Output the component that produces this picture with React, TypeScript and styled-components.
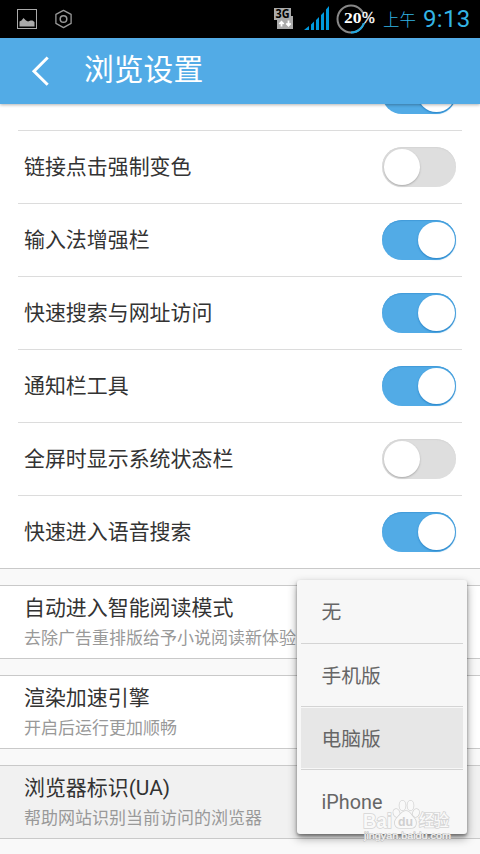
import React from "react";
import styled, { createGlobalStyle } from "styled-components";

const GlobalStyle = createGlobalStyle`
  * { box-sizing: border-box; }
  html, body { margin: 0; padding: 0; background: #f9f9f9; overflow: hidden; }
  body { font-family: Roboto, "Noto Sans CJK SC", sans-serif; }
`;

const Screen = styled.div`
  position: relative;
  display: flex;
  flex-direction: column;
  width: 480px;
  height: 854px;
  overflow: hidden;
  background: #f9f9f9;
`;

const StatusBar = styled.div`
  flex: none;
  display: flex;
  justify-content: space-between;
  height: 38px;
  background: #000;
  padding: 0 10px 0 17px;
`;

const StatusGroup = styled.div<{ $gap?: number }>`
  display: flex;
  align-items: center;
  gap: ${(p) => p.$gap ?? 0}px;
`;

const Battery = styled.div`
  position: relative;
  width: 40px;
  height: 38px;
  margin-left: 6px;
`;

const BatteryText = styled.div`
  position: absolute;
  left: 8px;
  top: 9px;
  display: flex;
  align-items: baseline;
  height: 18px;
  line-height: 18px;
  color: #fff;
  font-family: "Liberation Serif", serif;
`;

const Digits = styled.span`
  font-size: 14px;
  font-weight: bold;
  width: 14px;
  transform: scaleX(1.25);
  transform-origin: 0 50%;
  margin-right: 4px;
`;

const Percent = styled.span`
  font-size: 17px;
  width: 12px;
  -webkit-text-stroke: 0.4px #fff;
  transform: scaleX(0.9);
  transform-origin: 0 50%;
`;

const Meridiem = styled.span`
  margin: 4px 7px 0 7px;
  color: #33b5e5;
  font-size: 16.5px;
  line-height: 22px;
  font-weight: 300;
  white-space: nowrap;
`;

const Clock = styled.span`
  width: 47px;
  color: #33b5e5;
  font-size: 24px;
  letter-spacing: 0.3px;
  line-height: 38px;
  white-space: nowrap;
`;

const Header = styled.header`
  flex: none;
  z-index: 1;
  display: flex;
  align-items: center;
  height: 66px;
  padding: 0 0 2px 30px;
  background: #52abe6;
  box-shadow: 0 1px 3px rgba(0, 0, 0, 0.3);
`;

const Title = styled.h1`
  margin: 0 0 0 34px;
  color: #fff;
  font-size: 29.8px;
  line-height: 44px;
  font-weight: 400;
`;

const Content = styled.main`
  flex: 1;
  min-height: 0;
  overflow: hidden;
`;

const SwitchList = styled.section`
  margin-top: -46px;
  padding: 0 18px;
  background: #fff;
  border-bottom: 1px solid #c9c9c9;
`;

const SwitchRow = styled.div`
  display: flex;
  align-items: center;
  justify-content: space-between;
  height: 73px;
  padding: 0 6px;
  border-bottom: 1px solid #dcdcdc;
  &:last-child { border-bottom: 0; height: 72px; }
`;

const Label = styled.span`
  color: #333;
  font-size: 20.95px;
  line-height: 30px;
  white-space: nowrap;
`;

const Toggle = styled.span<{ $on: boolean }>`
  display: flex;
  justify-content: ${(p) => (p.$on ? "flex-end" : "flex-start")};
  width: 74px;
  height: 40px;
  padding: 2px 1.5px;
  border-radius: 20px;
  background: ${(p) => (p.$on ? "#52abe6" : "#dedede")};
  box-shadow: inset 0 1px 1px ${(p) => (p.$on ? "#429bd9" : "#d5d5d5")};
`;

const Knob = styled.span<{ $on: boolean }>`
  width: 36.5px;
  height: 36px;
  border-radius: 50%;
  background: #fff;
  box-shadow: 0 1px 2px ${(p) => (p.$on ? "#2481c6" : "#aaa")};
`;

const Card = styled.section<{ $pressed?: boolean }>`
  height: 74px;
  margin-top: 16px;
  padding: 7px 24px 0;
  background: ${(p) => (p.$pressed ? "#f1f1f1" : "#fff")};
  border-top: 1px solid #c9c9c9;
  border-bottom: 1px solid #c9c9c9;
`;

const CardTitle = styled.div`
  color: #333;
  font-size: 20.95px;
  line-height: 30px;
`;

const CardNote = styled.div`
  margin-top: 2px;
  color: #999;
  font-size: 17px;
  line-height: 26px;
  white-space: nowrap;
`;

const Menu = styled.div`
  position: absolute;
  z-index: 2;
  left: 297px;
  top: 580px;
  width: 170px;
  height: 254px;
  padding: 0 4px;
  border-radius: 3px;
  background: #f7f7f7;
  box-shadow: 0 4px 10px rgba(0, 0, 0, 0.38), 0 2px 3px rgba(0, 0, 0, 0.35);
`;

const MenuItem = styled.div<{ $selected?: boolean }>`
  display: flex;
  align-items: center;
  height: ${(p) => (p.$selected ? 63 : 64)}px;
  padding: 0 0 2px 20.5px;
  border-bottom: 1px solid #d4d4d4;
  color: #666;
  font-size: 19.8px;
  background: ${(p) => (p.$selected ? "#e7e7e7" : "transparent")};
  box-shadow: ${(p) => (p.$selected ? "inset 0 1px #f7f7f7, inset 0 -1px #f7f7f7" : "none")};
  &:nth-child(2) { height: 63px; }
  &:last-child { border-bottom: 0; padding-bottom: 0; }
`;

const Watermark = styled.div`
  position: absolute;
  z-index: 3;
  left: 360px;
  top: 796px;
  width: 96px;
  height: 48px;
`;

const options = [
  { label: "无" },
  { label: "手机版" },
  { label: "电脑版", selected: true },
  { label: "iPhone" },
];

const switches = [
  { label: "", on: true },
  { label: "链接点击强制变色", on: false },
  { label: "输入法增强栏", on: true },
  { label: "快速搜索与网址访问", on: true },
  { label: "通知栏工具", on: true },
  { label: "全屏时显示系统状态栏", on: false },
  { label: "快速进入语音搜索", on: true },
];

const cards = [
  { title: "自动进入智能阅读模式", note: "去除广告重排版给予小说阅读新体验" },
  { title: "渲染加速引擎", note: "开启后运行更加顺畅" },
  { title: "浏览器标识(UA)", note: "帮助网站识别当前访问的浏览器", pressed: true },
];

const PictureIcon = () => (
  <svg width="20" height="38" viewBox="0 0 20 38">
    <rect x="0.5" y="9.5" width="19" height="19" fill="none" stroke="#aaa" />
    <path d="M2.500 26.500v-5l2-1 2-2.500 2.500 2.500 2 1 2.500-1h2l2 1.500v4.500z" fill="#aaa" />
  </svg>
);

const HexIcon = () => (
  <svg width="18" height="38" viewBox="0 0 18 38" fill="none" stroke="#999" strokeWidth="1.3">
    <path d="M9.500 10.400l7.600 4v9l-7.600 4.200-7.600-4.200v-9z" strokeLinejoin="round" />
    <circle cx="9.500" cy="19" r="3.300" strokeWidth="1.500" />
  </svg>
);

const NetworkIcon = () => (
  <svg width="20" height="38" viewBox="0 0 20 38">
    <path d="M1 8h17v8h3v13H4v-9H1z" fill="#aaa" />
    <text x="2.500" y="18" fontFamily="Open Sans, sans-serif" fontWeight="bold" fontSize="11.500" textLength="14" lengthAdjust="spacingAndGlyphs" fill="#000">3G</text>
    <path d="M8.500 26.500v-5M6.300 24l2.200-2.300 2.200 2.300M15.500 20.500v5M13.300 23.300l2.200 2.300 2.200-2.300" fill="none" stroke="#fff" strokeWidth="1.800" />
  </svg>
);

const SignalIcon = () => (
  <svg width="26" height="38" viewBox="0 0 26 38" fill="#0099dd">
    <path d="M0 30l5-4v4zM7 24.500l3-3V30H7zM12 20l3-3v13h-3zM17 15l3-3v18h-3zM22 9.500L25 6v24h-3z" />
  </svg>
);

const BatteryRing = () => (
  <svg width="40" height="38" viewBox="0 0 40 38" fill="none">
    <circle cx="15" cy="19" r="13.500" stroke="#888" strokeWidth="2" />
    <path d="M28.500 20A13.500 13.500 0 0 1 15 32.500" stroke="#22a7df" strokeWidth="2" />
    <path d="M24 13h10v10H24z" fill="#000" />
  </svg>
);

const BackIcon = () => (
  <svg width="20" height="36" viewBox="0 0 20 36">
    <path d="M17.700 5.500L4 19.200l13.700 13.500" fill="none" stroke="#fff" strokeWidth="3" />
  </svg>
);

const WatermarkMark = () => (
  <svg width="96" height="48" viewBox="0 0 96 48" fontFamily="Liberation Sans, Noto Sans CJK SC, sans-serif" fontWeight="bold">
    <g fill="#f9f9f9" stroke="#d4d4d4" strokeWidth="1.600" paintOrder="stroke">
      <text x="3" y="32" fontSize="20" textLength="29" lengthAdjust="spacingAndGlyphs">Bai</text>
      <ellipse cx="36.500" cy="17" rx="3" ry="4" transform="rotate(-18 36.500 17)" />
      <ellipse cx="42.500" cy="9.500" rx="3" ry="4.700" />
      <ellipse cx="50.500" cy="9.500" rx="3" ry="4.700" />
      <ellipse cx="56" cy="17" rx="3" ry="4" transform="rotate(18 56 17)" />
      <path d="M46 15c4 0 5 4 8 7 3 3 3 10-3 10H40c-5 0-7-6-3-10 3-3 5-7 9-7z" />
      <text x="59" y="30" fontSize="15.500" textLength="30" fontWeight="500">经验</text>
    </g>
    <text x="38" y="30" fontSize="13" fill="#cfcfcf" textLength="15" lengthAdjust="spacingAndGlyphs">du</text>
    <text x="4" y="43" fontSize="9.500" fontWeight="400" fill="#f6f6f6" stroke="#bbb" strokeWidth="0.800" paintOrder="stroke" textLength="87" lengthAdjust="spacingAndGlyphs">jingyan.baidu.com</text>
  </svg>
);

export default function App() {
  return (
    <Screen>
      <GlobalStyle />
      <StatusBar>
        <StatusGroup $gap={17}>
          <PictureIcon />
          <HexIcon />
        </StatusGroup>
        <StatusGroup>
          <StatusGroup $gap={11}>
            <NetworkIcon />
            <SignalIcon />
          </StatusGroup>
          <Battery>
            <BatteryRing />
            <BatteryText>
              <Digits>20</Digits>
              <Percent>%</Percent>
            </BatteryText>
          </Battery>
          <Meridiem>上午</Meridiem>
          <Clock>9:13</Clock>
        </StatusGroup>
      </StatusBar>
      <Header>
        <BackIcon />
        <Title>浏览设置</Title>
      </Header>
      <Content>
        <SwitchList>
          {switches.map((s, i) => (
            <SwitchRow key={i}>
              <Label>{s.label}</Label>
              <Toggle $on={s.on}>
                <Knob $on={s.on} />
              </Toggle>
            </SwitchRow>
          ))}
        </SwitchList>
        {cards.map((c) => (
          <Card key={c.title} $pressed={c.pressed}>
            <CardTitle>{c.title}</CardTitle>
            <CardNote>{c.note}</CardNote>
          </Card>
        ))}
      </Content>
      <Menu>
        {options.map((o) => (
          <MenuItem key={o.label} $selected={o.selected}>
            {o.label}
          </MenuItem>
        ))}
      </Menu>
      <Watermark>
        <WatermarkMark />
      </Watermark>
    </Screen>
  );
}
